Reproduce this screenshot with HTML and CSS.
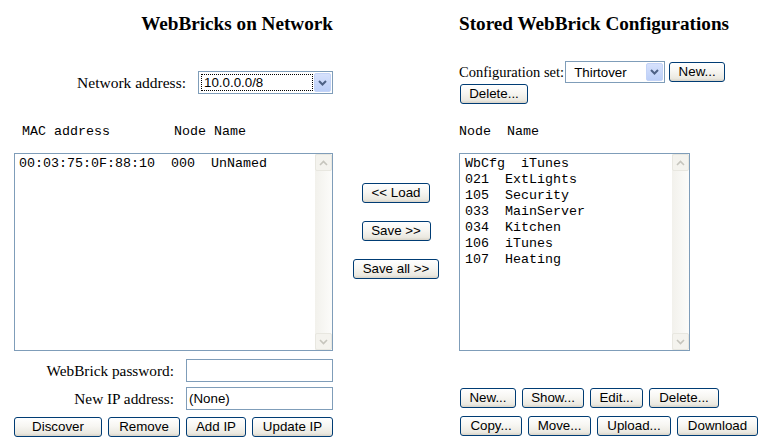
FILE: index.html
```html
<!DOCTYPE html>
<html>
<head>
<meta charset="utf-8">
<title>WebBrick Configurations</title>
<link rel="stylesheet" href="styles.css">
</head>
<body>
<div class="page">
  <h2 class="title title-left">WebBricks on Network</h2>
  <div class="spacer"></div>
  <h2 class="title title-right">Stored WebBrick Configurations</h2>

  <div class="net-row">
    <span class="label label-net">Network address:</span>
    <div class="select select-net">
      <span class="select-text focus">10.0.0.0/8</span>
      <span class="select-btn"><svg width="9" height="6" viewBox="0 0 9 6"><path d="M1 1 L4.5 4.5 L8 1" fill="none" stroke="#4d6185" stroke-width="2"/></svg></span>
    </div>
  </div>
  <div class="spacer"></div>
  <div class="cfg">
    <div class="cfg-row">
      <span class="label label-cfg">Configuration set:</span>
      <div class="select select-cfg">
        <span class="select-text cfg-text">Thirtover</span>
        <span class="select-btn"><svg width="9" height="6" viewBox="0 0 9 6"><path d="M1 1 L4.5 4.5 L8 1" fill="none" stroke="#4d6185" stroke-width="2"/></svg></span>
      </div>
      <button class="btn w-new">New...</button>
    </div>
    <div class="cfg-row2"><button class="btn w-cfgdel">Delete...</button></div>
  </div>

  <pre class="colhead colhead-left">MAC address        Node Name</pre>
  <div class="spacer"></div>
  <pre class="colhead colhead-right">Node  Name</pre>

  <div class="listbox list-left">
    <pre class="list-items">00:03:75:0F:88:10  000  UnNamed</pre>
    <div class="scrollbar">
      <span class="sb-btn"><svg width="9" height="6" viewBox="0 0 9 6"><path d="M1 5 L4.5 1.5 L8 5" fill="none" stroke="#c6c5bd" stroke-width="1.6"/></svg></span>
      <span class="sb-track"></span>
      <span class="sb-btn"><svg width="9" height="6" viewBox="0 0 9 6"><path d="M1 1 L4.5 4.5 L8 1" fill="none" stroke="#c6c5bd" stroke-width="1.6"/></svg></span>
    </div>
  </div>
  <div class="mid">
    <button class="btn w-load">&lt;&lt; Load</button>
    <button class="btn w-save">Save &gt;&gt;</button>
    <button class="btn w-saveall">Save all &gt;&gt;</button>
  </div>
  <div class="listbox list-right">
    <pre class="list-items list-items-right">WbCfg  iTunes
021  ExtLights
105  Security
033  MainServer
034  Kitchen
106  iTunes
107  Heating</pre>
    <div class="scrollbar">
      <span class="sb-btn"><svg width="9" height="6" viewBox="0 0 9 6"><path d="M1 5 L4.5 1.5 L8 5" fill="none" stroke="#c6c5bd" stroke-width="1.6"/></svg></span>
      <span class="sb-track"></span>
      <span class="sb-btn"><svg width="9" height="6" viewBox="0 0 9 6"><path d="M1 1 L4.5 4.5 L8 1" fill="none" stroke="#c6c5bd" stroke-width="1.6"/></svg></span>
    </div>
  </div>

  <div class="bl">
    <div class="field-row">
      <span class="label">WebBrick password:</span>
      <input class="field" type="password" value="">
    </div>
    <div class="field-row">
      <span class="label">New IP address:</span>
      <input class="field" type="text" value="(None)">
    </div>
    <div class="btn-row">
      <button class="btn w-discover">Discover</button>
      <button class="btn w-remove">Remove</button>
      <button class="btn w-addip">Add IP</button>
      <button class="btn w-updateip">Update IP</button>
    </div>
  </div>
  <div class="spacer"></div>
  <div class="br">
    <div class="btn-row">
      <button class="btn w-new">New...</button>
      <button class="btn w-show">Show...</button>
      <button class="btn w-edit">Edit...</button>
      <button class="btn w-delete">Delete...</button>
    </div>
    <div class="btn-row">
      <button class="btn w-copy">Copy...</button>
      <button class="btn w-move">Move...</button>
      <button class="btn w-upload">Upload...</button>
      <button class="btn w-download">Download</button>
    </div>
  </div>
</div>
</body>
</html>
```

FILE: styles.css
```css
* { box-sizing: border-box; }

body {
  margin: 0;
  background: #fff;
  color: #000;
  font-family: "Liberation Serif", "Times New Roman", serif;
}

.page {
  display: grid;
  grid-template-columns: 319px 126px 312px;
  grid-template-rows: 45px 73px 35px 198px auto;
  padding-left: 14px;
}

.title {
  margin: 13px 0 0;
  font-size: 19.2px;
  font-weight: bold;
  line-height: 22px;
  white-space: nowrap;
}
.title-left { text-align: right; }
.title-right { text-align: left; }

.label {
  font-size: 15.3px;
  white-space: nowrap;
}

.net-row {
  display: flex;
  justify-content: flex-end;
  align-items: center;
  margin-top: 26px;
  height: 23px;
}
.label-net { margin-right: 12px; font-size: 15.5px; }

.select {
  display: flex;
  align-items: stretch;
  border: 1px solid #7f9db9;
  background: #fff;
  padding: 1px;
  font-family: "Liberation Sans", Arial, sans-serif;
  font-size: 13.33px;
}
.select-net { width: 135px; height: 23px; }
.select-cfg { width: 100px; height: 22px; }

.select-text {
  flex: 1;
  display: flex;
  align-items: center;
  padding-left: 3px;
  white-space: nowrap;
}
.focus {
  margin: 1px;
  border: 1px dotted #000;
  padding-left: 2px;
}
.cfg-text { padding-left: 7px; }

.select-btn {
  width: 17px;
  display: flex;
  align-items: center;
  justify-content: center;
  background: linear-gradient(#d6e1fc, #bccff8);
  border: 1px solid #c3d3f7;
  border-radius: 2px;
}

.cfg { margin-top: 16px; }
.cfg-row {
  display: flex;
  align-items: center;
  height: 22px;
}
.label-cfg { font-size: 14.5px; margin-right: 1px; }
.cfg-row .btn { margin-left: 4px; }
.cfg-row2 { margin-top: 1px; padding-left: 1px; }

.colhead {
  margin: 6px 0 0;
  font-family: "Liberation Mono", "Courier New", monospace;
  font-size: 13.33px;
  line-height: 16px;
}
.colhead-left { padding-left: 8px; }

.listbox {
  display: flex;
  border: 1px solid #7f9db9;
  height: 198px;
  background: #fff;
}
.list-left { width: 319px; }
.list-right { width: 231px; }

.list-items {
  flex: 1;
  margin: 0;
  padding: 2px 4px;
  font-family: "Liberation Mono", "Courier New", monospace;
  font-size: 13.33px;
  line-height: 16px;
}
.list-items-right { padding-left: 5px; }

.scrollbar {
  width: 17px;
  display: flex;
  flex-direction: column;
  background: linear-gradient(to right, #f2f1ec, #fcfcfa);
}
.sb-btn {
  height: 17px;
  display: flex;
  align-items: center;
  justify-content: center;
  background: #f4f3ee;
  border: 1px solid #e8e7e0;
  border-radius: 2px;
}
.sb-track { flex: 1; }

.mid {
  display: flex;
  flex-direction: column;
  align-items: center;
  padding-top: 30px;
  gap: 18px;
}

.btn {
  height: 20px;
  padding: 0;
  border: 1px solid #003c74;
  border-radius: 3px;
  background: linear-gradient(#ffffff 0%, #f7f6f2 45%, #ebe9e1 85%, #d8d3c8 100%);
  font-family: "Liberation Sans", Arial, sans-serif;
  font-size: 13.33px;
  line-height: 18px;
  color: #000;
  text-align: center;
  white-space: nowrap;
}

.w-load { width: 68px; }
.w-save { width: 69px; }
.w-saveall { width: 86px; }
.w-new { width: 56px; }
.w-cfgdel { width: 68px; }
.w-discover { width: 88px; }
.w-remove { width: 72px; }
.w-addip { width: 60px; }
.w-updateip { width: 81px; }
.w-show { width: 62px; }
.w-edit { width: 53px; }
.w-delete { width: 70px; }
.w-copy { width: 62px; }
.w-move { width: 63px; }
.w-upload { width: 74px; }
.w-download { width: 81px; }

.bl {
  padding-top: 8px;
  display: flex;
  flex-direction: column;
}
.field-row {
  display: flex;
  justify-content: flex-end;
  align-items: center;
  height: 23px;
  margin-bottom: 5px;
}
.field-row .label { margin-right: 12px; }
.field {
  width: 147px;
  height: 23px;
  margin: 0;
  border: 1px solid #7f9db9;
  padding: 0 2px;
  font-family: "Liberation Sans", Arial, sans-serif;
  font-size: 13.33px;
  color: #000;
  background: #fff;
}

.btn-row {
  display: flex;
  gap: 6px;
}
.bl .btn-row { margin-top: 2px; }

.br {
  padding-top: 37px;
  padding-left: 1px;
  display: flex;
  flex-direction: column;
  gap: 8px;
}
```
